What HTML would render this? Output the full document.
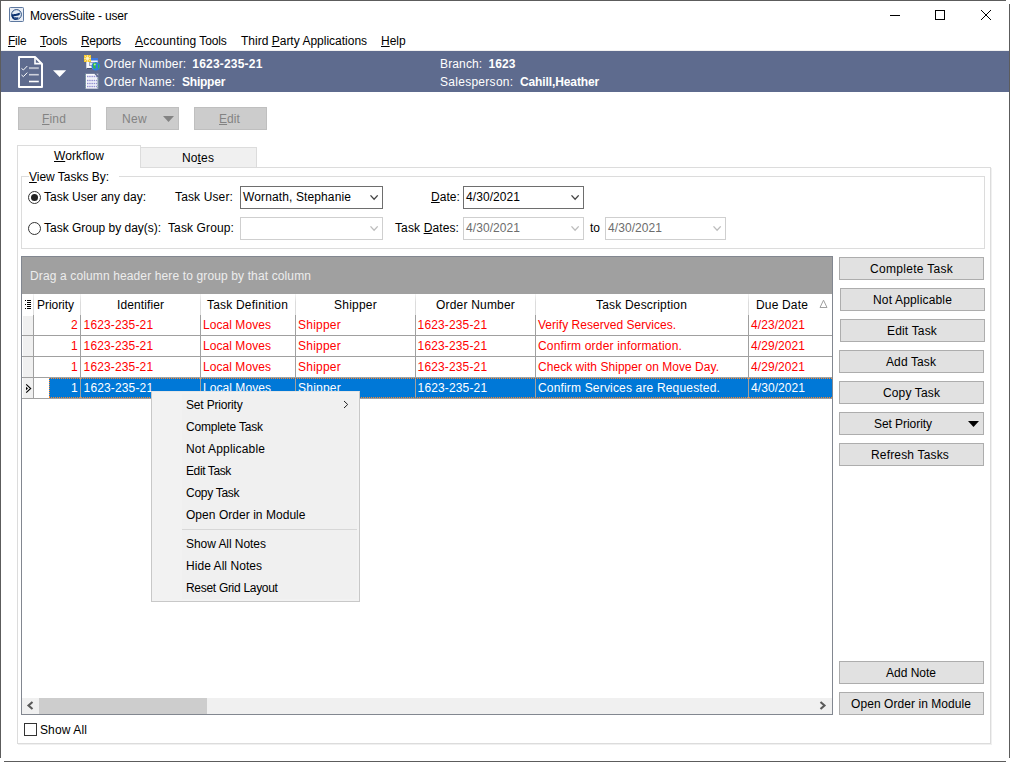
<!DOCTYPE html>
<html>
<head>
<meta charset="utf-8">
<title>MoversSuite - user</title>
<style>
html,body{margin:0;padding:0;}
body{width:1010px;height:762px;overflow:hidden;background:#fff;position:relative;font-family:"Liberation Sans",sans-serif;font-size:12px;color:#000;}
.abs{position:absolute;}
.t{position:absolute;white-space:nowrap;line-height:14px;height:14px;}
u{text-decoration:underline;text-underline-offset:1px;text-decoration-thickness:1px;}
#bt{left:0;top:0;width:1006px;height:1px;background:#5c5c5c;}
#bl{left:0;top:0;width:1px;height:758px;background:#5c5c5c;}
#br{left:1009px;top:4px;width:1px;height:754px;background:#5c5c5c;}
#bb{left:4px;top:761px;width:1002px;height:1px;background:#5c5c5c;}
#hdr{left:1px;top:51px;width:1008px;height:41px;background:#5e6b8e;}
.hw{color:#fff;}
.b{font-weight:bold;}
.tbtn{position:absolute;top:107px;width:71px;height:21px;background:#ccc;border:1px solid #bfbfbf;}
.g{color:#838383;}
#panel{left:17px;top:167px;width:974px;height:577px;border:1px solid #dcdcdc;box-sizing:border-box;background:#fff;box-shadow:1px 1px 0 #f0f0f0;}
#tab1{left:17px;top:145px;width:124px;height:23px;border:1px solid #dcdcdc;border-bottom:none;box-sizing:border-box;background:#fff;}
#tab2{left:140px;top:147px;width:117px;height:20px;border:1px solid #dcdcdc;border-bottom:none;box-sizing:border-box;background:#f0f0f0;}
#gb{left:21px;top:176px;width:964px;height:73px;border:1px solid #dcdcdc;box-sizing:border-box;}
.combo{position:absolute;box-sizing:border-box;background:#fff;height:23px;}
.combo svg{position:absolute;right:3px;top:8px;}
.en{border:1px solid #6e6e6e;}
.dis{border:1px solid #cfcfcf;}
.dt{color:#6d6d6d;}
.radio{position:absolute;width:11px;height:11px;border:1px solid #333;border-radius:50%;background:#fff;}
#grid{left:21px;top:256px;width:812px;height:459px;border:1px solid #828790;box-sizing:border-box;background:#fff;}
#gpanel{left:22px;top:257px;width:810px;height:37px;background:#a0a0a0;}
.vl{position:absolute;width:1px;background:#a0a0a0;}
.hl{position:absolute;height:1px;background:#a0a0a0;left:22px;width:810px;}
.r{color:#f00;}
.w{color:#fff;}
.rbtn{position:absolute;width:143px;height:21px;border:1px solid #adadad;background:#e1e1e1;}
#ctx{left:151px;top:391px;width:209px;height:211px;box-sizing:border-box;border:1px solid #c8c8c8;border-top-color:#e6e6e6;background:#f2f2f2;}
#ctxg{left:182px;top:394px;width:175px;height:205px;background:#f0f0f0;}
.mi{position:absolute;white-space:nowrap;line-height:16px;height:16px;}
</style>
</head>
<body>
<div class="abs" id="icon" style="left:9px;top:7px;width:15px;height:15px;">
<svg width="15" height="15" viewBox="0 0 15 15"><rect x="0.5" y="0.5" width="14" height="14" rx="0.8" fill="#e8edf5" stroke="#5d789f"/><circle cx="7.5" cy="7.5" r="4.9" fill="#e4ebf4" stroke="#123a72" stroke-width="0.9"/><path transform="translate(0,0.8)" d="M2.700 6.300C4.200 5.700 5.600 6.600 7.300 6L10.600 4.900C11.300 6 10.800 7.300 9.400 7.700 7.600 8.200 5.400 8 4 9 5.600 9.600 8 9 9.600 9.700 8.800 12 5.600 12.900 3.900 11.300 2.700 10.100 2.400 8 2.700 6.300Z" fill="#0c3270"/><path d="M3.400 6.900h1.600" stroke="#c9d6e8" stroke-width="0.8"/><path d="M5 10.700c1.300.3 2.400.2 3.300-.2" stroke="#9fb3d1" stroke-width="0.700" fill="none"/></svg>
</div>
<div class="t" style="left:30px;top:9px;letter-spacing:-0.17px;">MoversSuite - user</div>
<svg class="abs" style="left:880px;top:5px;" width="120" height="22" viewBox="0 0 120 22"><path d="M10 10.5h10" stroke="#000" stroke-width="1"/><rect x="55.5" y="5.5" width="9" height="9" fill="none" stroke="#000"/><path d="M101 5l10 10M111 5l-10 10" stroke="#000" stroke-width="1"/></svg>
<div class="abs" style="left:1px;top:50px;width:1008px;height:1px;background:#f0f0f0;"></div>
<div class="t" style="left:8px;top:34px;letter-spacing:-0.25px;"><u>F</u>ile</div>
<div class="t" style="left:40px;top:34px;letter-spacing:-0.2px;"><u>T</u>ools</div>
<div class="t" style="left:81px;top:34px;letter-spacing:-0.34px;"><u>R</u>eports</div>
<div class="t" style="left:135px;top:34px;letter-spacing:0.2px;"><u>A</u>ccounting<span style="letter-spacing:-0.15px;"> Tools</span></div>
<div class="t" style="left:241px;top:34px;letter-spacing:0px;">Third <u>P</u>arty Applications</div>
<div class="t" style="left:381px;top:34px;letter-spacing:0px;"><u>H</u>elp</div>
<div class="abs" id="hdr"></div>
<svg class="abs" style="left:17px;top:55px;" width="52" height="36" viewBox="0 0 52 36"><path d="M2 2H18L25 9V32H2Z" fill="none" stroke="#fff" stroke-width="2" stroke-linejoin="round"/><path d="M18 2V8.6H25" fill="none" stroke="#fff" stroke-width="1.6"/><path d="M4.5 13.4L6.4 15 10.3 11M4.5 20L6.4 21.6 10.3 17.6" fill="none" stroke="#fff" stroke-width="1"/><path d="M12 13.1H21.8" stroke="#b3b8c8" stroke-width="2"/><path d="M12 19.7H21.8" stroke="#ced1db" stroke-width="1.6"/><path d="M12 26.5H21.8" stroke="#fff" stroke-width="1.6"/><path d="M36 15.2H49.2L42.6 22Z" fill="#fff"/></svg>
<div class="abs" id="ico1" style="left:83px;top:54px;width:18px;height:18px;">
<svg width="18" height="18" viewBox="0 0 18 18"><rect x="3.5" y="4.5" width="11" height="10" fill="#f6f7fb" stroke="#c9cfdf"/><rect x="8" y="4" width="7" height="2.5" fill="#3d78e0"/><rect x="6" y="8" width="5" height="4" fill="#9aa3b8"/><rect x="7" y="9" width="3" height="2" fill="#e8ebf3"/><path d="M3.5 14.5H9" stroke="#46506e" stroke-width="1"/><rect x="1" y="1" width="7" height="7" fill="#f5c934"/><path d="M4.5 1v7M1 4.5h7M2 2l5 5M7 2l-5 5" stroke="#fbe79a" stroke-width="0.9"/><circle cx="4.5" cy="4.5" r="1.2" fill="#fff6d0"/><circle cx="12.8" cy="12.2" r="4.3" fill="#2f7be0"/><path d="M10.5 9.5c1.2-1 2.5-1 3-.2.300 1-1 1.200-1.200 2.200-.2 1 .8 1.300.5 2.300-.3 1-1.500 1.200-2.200.4-.6-.8.200-1.600-.3-2.500-.4-.8-.6-1.400.2-2.200z" fill="#2fc035"/><path d="M15.2 10c.8.400 1.400 1.500 1.200 2.800-.3 1.200-1 1.900-1.600 2-.2-.8.600-1.400.4-2.300-.2-.9-.6-1.600 0-2.500z" fill="#34c23a"/><circle cx="11.800" cy="10.600" r="1" fill="#c8f5c0" opacity="0.8"/></svg>
</div>
<div class="abs" id="ico2" style="left:84px;top:73px;width:16px;height:17px;">
<svg width="16" height="17" viewBox="0 0 16 17"><rect x="1" y="0.5" width="13.5" height="15.5" fill="#8a93b0"/><rect x="2" y="1" width="11.5" height="14.5" fill="#fbfbfe"/><path d="M3 3.5h10M3 7.5h10M3 10.5h10M3 13.5h10" stroke="#8f8ed0" stroke-width="1.4" stroke-dasharray="1.5 0.7"/><path d="M3.5 5h9M3.5 9h9M3.5 12h9" stroke="#dfe3f3" stroke-width="0.8"/><path d="M1.5 1v15M14 3v13" stroke="#6f9a94" stroke-width="1" stroke-dasharray="1 1.2"/><path d="M11 0.5l3.500 3.500" stroke="#5e6b8e" stroke-width="1.5"/></svg>
</div>
<div class="t hw" style="left:104px;top:57px;letter-spacing:0.18px;">Order Number:</div>
<div class="t hw b" style="left:192.3px;top:57px;letter-spacing:0.2px;">1623-235-21</div>
<div class="t hw" style="left:104px;top:75px;letter-spacing:0.18px;">Order Name:</div>
<div class="t hw b" style="left:182px;top:75px;letter-spacing:-0.22px;">Shipper</div>
<div class="t hw" style="left:440px;top:57px;letter-spacing:0.14px;">Branch:</div>
<div class="t hw b" style="left:488.5px;top:57px;letter-spacing:0.1px;">1623</div>
<div class="t hw" style="left:440px;top:75px;letter-spacing:0.28px;">Salesperson:</div>
<div class="t hw b" style="left:520px;top:75px;letter-spacing:-0.11px;">Cahill,Heather</div>
<div class="tbtn" style="left:18px;"></div>
<div class="tbtn" style="left:106px;"></div>
<div class="tbtn" style="left:194px;"></div>
<div class="t g" style="left:42px;top:112px;letter-spacing:0.164px;"><u>F</u>ind</div>
<div class="t g" style="left:122px;top:112px;letter-spacing:0.328px;">New</div>
<svg class="abs" style="left:163px;top:116px;" width="11" height="6" viewBox="0 0 11 6"><path d="M0 0h11l-5.500 6z" fill="#838383"/></svg>
<div class="t g" style="left:219px;top:112px;letter-spacing:0.082px;"><u>E</u>dit</div>
<div class="abs" id="panel"></div><div class="abs" id="tab2"></div><div class="abs" id="tab1"></div>
<div class="t" style="left:54px;top:149px;letter-spacing:0.109px;"><u>W</u>orkflow</div>
<div class="t" style="left:182px;top:151px;letter-spacing:0.131px;">No<u>t</u>es</div>
<div class="abs" id="gb"></div>
<div class="t" style="left:29px;top:170px;letter-spacing:-0.017px;background:#fff;padding-right:10px;"><u>V</u>iew Tasks By:</div>
<div class="radio" style="left:28px;top:191px;"><div style="position:absolute;left:2px;top:2px;width:7px;height:7px;border-radius:50%;background:#222;"></div></div>
<div class="t" style="left:44px;top:190px;letter-spacing:-0.001px;">Task User any day:</div>
<div class="t" style="left:175px;top:190px;letter-spacing:0.133px;">Task User:</div>
<div class="combo en" style="left:240px;top:186px;width:143px;"><svg width="9" height="6" viewBox="0 0 9 6"><path d="M0.500 0.400l3.600 3.800 3.600-3.800" fill="none" stroke="#444" stroke-width="1.300"/></svg></div>
<div class="t" style="left:243px;top:190px;letter-spacing:0.122px;">Wornath, Stephanie</div>
<div class="t" style="left:431px;top:190px;letter-spacing:0.066px;"><u>D</u>ate:</div>
<div class="combo en" style="left:463px;top:186px;width:121px;"><svg width="9" height="6" viewBox="0 0 9 6"><path d="M0.500 0.400l3.600 3.800 3.600-3.800" fill="none" stroke="#444" stroke-width="1.300"/></svg></div>
<div class="t" style="left:466px;top:190px;letter-spacing:0.071px;">4/30/2021</div>
<div class="radio" style="left:28px;top:222px;"></div>
<div class="t" style="left:44px;top:221px;letter-spacing:-0.016px;">Task Group by day(s):</div>
<div class="t" style="left:168px;top:221px;letter-spacing:0.121px;">Task Group:</div>
<div class="combo dis" style="left:240px;top:217px;width:143px;"><svg width="9" height="6" viewBox="0 0 9 6"><path d="M0.500 0.400l3.600 3.800 3.600-3.800" fill="none" stroke="#bdbdbd" stroke-width="1.300"/></svg></div>
<div class="t" style="left:395px;top:221px;letter-spacing:0.121px;">Task <u>D</u>ates:</div>
<div class="combo dis" style="left:463px;top:217px;width:121px;"><svg width="9" height="6" viewBox="0 0 9 6"><path d="M0.500 0.400l3.600 3.800 3.600-3.800" fill="none" stroke="#bdbdbd" stroke-width="1.300"/></svg></div>
<div class="t dt" style="left:466px;top:221px;letter-spacing:0.071px;">4/30/2021</div>
<div class="t" style="left:590px;top:221px;letter-spacing:0px;">to</div>
<div class="combo dis" style="left:605px;top:217px;width:121px;"><svg width="9" height="6" viewBox="0 0 9 6"><path d="M0.500 0.400l3.600 3.800 3.600-3.800" fill="none" stroke="#bdbdbd" stroke-width="1.300"/></svg></div>
<div class="t dt" style="left:608px;top:221px;letter-spacing:0.071px;">4/30/2021</div>
<div class="abs" id="grid"></div><div class="abs" id="gpanel"></div>
<div class="t" style="left:30px;top:269px;letter-spacing:0.128px;color:#ededed;">Drag a column header here to group by that column</div>
<div class="vl" style="left:33px;top:294px;height:21px;background:linear-gradient(#f4f4f4,#dcdcdc 40%,#dcdcdc);"></div>
<div class="vl" style="left:80px;top:294px;height:21px;background:linear-gradient(#f4f4f4,#dcdcdc 40%,#dcdcdc);"></div>
<div class="vl" style="left:200px;top:294px;height:21px;background:linear-gradient(#f4f4f4,#dcdcdc 40%,#dcdcdc);"></div>
<div class="vl" style="left:295px;top:294px;height:21px;background:linear-gradient(#f4f4f4,#dcdcdc 40%,#dcdcdc);"></div>
<div class="vl" style="left:415px;top:294px;height:21px;background:linear-gradient(#f4f4f4,#dcdcdc 40%,#dcdcdc);"></div>
<div class="vl" style="left:535px;top:294px;height:21px;background:linear-gradient(#f4f4f4,#dcdcdc 40%,#dcdcdc);"></div>
<div class="vl" style="left:748px;top:294px;height:21px;background:linear-gradient(#f4f4f4,#dcdcdc 40%,#dcdcdc);"></div>
<div class="abs" style="left:23px;top:316px;width:10px;height:82px;background:#f0f0f0;"></div>
<div class="abs" style="left:49px;top:378px;width:783px;height:20px;background:#0078d7;"></div>
<div class="vl" style="left:33px;top:315px;height:83px;"></div>
<div class="vl" style="left:80px;top:315px;height:83px;"></div>
<div class="vl" style="left:200px;top:315px;height:83px;"></div>
<div class="vl" style="left:295px;top:315px;height:83px;"></div>
<div class="vl" style="left:415px;top:315px;height:83px;"></div>
<div class="vl" style="left:535px;top:315px;height:83px;"></div>
<div class="vl" style="left:748px;top:315px;height:83px;"></div>
<div class="hl" style="top:335px;"></div>
<div class="hl" style="top:356px;"></div>
<div class="hl" style="top:377px;"></div>
<div class="hl" style="top:398px;"></div>
<div class="abs" style="left:49px;top:378px;width:783px;height:1px;background:repeating-linear-gradient(90deg,#ff8728 0 1px,transparent 1px 2px);"></div>
<div class="abs" style="left:49px;top:397px;width:783px;height:1px;background:repeating-linear-gradient(90deg,#ff8728 0 1px,transparent 1px 2px);"></div>
<div class="abs" style="left:49px;top:378px;width:1px;height:20px;background:repeating-linear-gradient(180deg,#ff8728 0 1px,transparent 1px 2px);"></div>
<svg class="abs" style="left:24px;top:299px;" width="8" height="11" viewBox="0 0 8 11"><path d="M1 1.500h1M1 5.500h1M1 9.500h1M3 1.500h4M3 3.500h4M3 5.500h4M3 7.500h4M3 9.500h4" stroke="#000" stroke-width="1" shape-rendering="crispEdges"/></svg>
<svg class="abs" style="left:25px;top:383px;" width="7" height="11" viewBox="0 0 7 11"><path d="M1.200 1.400L5.700 5.500 1.200 9.600" fill="none" stroke="#000" stroke-width="1.100"/><path d="M1 3.700v3.600l2-1.800z" fill="#000"/></svg>
<div class="t" style="left:37px;top:298px;letter-spacing:-0.043px;">Priority</div>
<div class="t" style="left:117px;top:298px;letter-spacing:0.098px;">Identifier</div>
<div class="t" style="left:207px;top:298px;letter-spacing:0.198px;">Task Definition</div>
<div class="t" style="left:334px;top:298px;letter-spacing:0.234px;">Shipper</div>
<div class="t" style="left:436px;top:298px;letter-spacing:0.193px;">Order Number</div>
<div class="t" style="left:596px;top:298px;letter-spacing:0.186px;">Task Description</div>
<div class="t" style="left:756px;top:298px;letter-spacing:0.164px;">Due Date</div>
<svg class="abs" style="left:819px;top:299px;" width="9" height="10" viewBox="0 0 9 10"><path d="M4.500 1.200L1 8.500h7z" fill="none" stroke="#a0a0a0" stroke-width="1"/></svg>
<div class="t r" style="left:71px;top:318px;letter-spacing:0.328px;">2</div>
<div class="t r" style="left:83.6px;top:318px;letter-spacing:0.141px;">1623-235-21</div>
<div class="t r" style="left:203px;top:318px;letter-spacing:0.058px;">Local Moves</div>
<div class="t r" style="left:298px;top:318px;letter-spacing:0.234px;">Shipper</div>
<div class="t r" style="left:417.6px;top:318px;letter-spacing:0.141px;">1623-235-21</div>
<div class="t r" style="left:538px;top:318px;letter-spacing:0.025px;">Verify Reserved Services.</div>
<div class="t r" style="left:751px;top:318px;letter-spacing:0.071px;">4/23/2021</div>
<div class="t r" style="left:71px;top:339px;letter-spacing:0.328px;">1</div>
<div class="t r" style="left:83.6px;top:339px;letter-spacing:0.141px;">1623-235-21</div>
<div class="t r" style="left:203px;top:339px;letter-spacing:0.058px;">Local Moves</div>
<div class="t r" style="left:298px;top:339px;letter-spacing:0.234px;">Shipper</div>
<div class="t r" style="left:417.6px;top:339px;letter-spacing:0.141px;">1623-235-21</div>
<div class="t r" style="left:538px;top:339px;letter-spacing:0.178px;">Confirm order information.</div>
<div class="t r" style="left:751px;top:339px;letter-spacing:0.071px;">4/29/2021</div>
<div class="t r" style="left:71px;top:360px;letter-spacing:0.328px;">1</div>
<div class="t r" style="left:83.6px;top:360px;letter-spacing:0.141px;">1623-235-21</div>
<div class="t r" style="left:203px;top:360px;letter-spacing:0.058px;">Local Moves</div>
<div class="t r" style="left:298px;top:360px;letter-spacing:0.234px;">Shipper</div>
<div class="t r" style="left:417.6px;top:360px;letter-spacing:0.141px;">1623-235-21</div>
<div class="t r" style="left:538px;top:360px;letter-spacing:0.038px;">Check with Shipper on Move Day.</div>
<div class="t r" style="left:751px;top:360px;letter-spacing:0.071px;">4/29/2021</div>
<div class="t w" style="left:71px;top:381px;letter-spacing:0.328px;">1</div>
<div class="t w" style="left:83.6px;top:381px;letter-spacing:0.141px;">1623-235-21</div>
<div class="t w" style="left:203px;top:381px;letter-spacing:0.058px;">Local Moves</div>
<div class="t w" style="left:298px;top:381px;letter-spacing:0.234px;">Shipper</div>
<div class="t w" style="left:417.6px;top:381px;letter-spacing:0.141px;">1623-235-21</div>
<div class="t w" style="left:538px;top:381px;letter-spacing:0.17px;">Confirm Services are Requested.</div>
<div class="t w" style="left:751px;top:381px;letter-spacing:0.071px;">4/30/2021</div>
<div class="rbtn" style="left:839px;top:257px;"></div>
<div class="t" style="left:870px;top:262px;letter-spacing:0.297px;">Complete Task</div>
<div class="rbtn" style="left:840px;top:288px;"></div>
<div class="t" style="left:873px;top:293px;letter-spacing:0.163px;">Not Applicable</div>
<div class="rbtn" style="left:840px;top:319px;"></div>
<div class="t" style="left:887px;top:324px;letter-spacing:0.172px;">Edit Task</div>
<div class="rbtn" style="left:839px;top:350px;"></div>
<div class="t" style="left:886px;top:355px;letter-spacing:0.109px;">Add Task</div>
<div class="rbtn" style="left:839px;top:381px;"></div>
<div class="t" style="left:883px;top:386px;letter-spacing:0.134px;">Copy Task</div>
<div class="rbtn" style="left:839px;top:412px;"></div>
<div class="rbtn" style="left:839px;top:443px;"></div>
<div class="t" style="left:871px;top:448px;letter-spacing:0.169px;">Refresh Tasks</div>
<div class="rbtn" style="left:839px;top:661px;"></div>
<div class="t" style="left:886px;top:666px;letter-spacing:-0.002px;">Add Note</div>
<div class="rbtn" style="left:839px;top:692px;"></div>
<div class="t" style="left:851px;top:697px;letter-spacing:0.065px;">Open Order in Module</div>
<div class="t" style="left:874px;top:417px;letter-spacing:-0.056px;">Set Priority</div>
<svg class="abs" style="left:968px;top:421px;" width="11" height="6" viewBox="0 0 11 6"><path d="M0 0h11l-5.500 6z" fill="#000"/></svg>
<div class="abs" style="left:22px;top:698px;width:810px;height:16px;background:#f0f0f0;"></div>
<div class="abs" style="left:39px;top:698px;width:168px;height:16px;background:#cdcdcd;"></div>
<svg class="abs" style="left:26px;top:701px;" width="8" height="9" viewBox="0 0 8 9"><path d="M6.500 1l-4 3.500 4 3.500" fill="none" stroke="#5a5a5a" stroke-width="2.100"/></svg>
<svg class="abs" style="left:819px;top:701px;" width="8" height="9" viewBox="0 0 8 9"><path d="M1.500 1l4 3.500-4 3.500" fill="none" stroke="#5a5a5a" stroke-width="2.100"/></svg>
<div class="abs" style="left:24px;top:723px;width:11px;height:11px;border:1px solid #333;background:#fff;"></div>
<div class="t" style="left:40px;top:723px;letter-spacing:0.121px;">Show All</div>
<div class="abs" id="ctx"></div><div class="abs" id="ctxg"></div>
<div class="mi" style="left:186px;top:397px;letter-spacing:-0.18px;">Set Priority</div>
<div class="mi" style="left:186px;top:419px;letter-spacing:-0.17px;">Complete Task</div>
<div class="mi" style="left:186px;top:441px;letter-spacing:0.17px;">Not Applicable</div>
<div class="mi" style="left:186px;top:463px;letter-spacing:-0.39px;">Edit Task</div>
<div class="mi" style="left:186px;top:485px;letter-spacing:-0.29px;">Copy Task</div>
<div class="mi" style="left:186px;top:507px;letter-spacing:0.04px;">Open Order in Module</div>
<div class="mi" style="left:186px;top:536px;letter-spacing:-0.06px;">Show All Notes</div>
<div class="mi" style="left:186px;top:558px;letter-spacing:0.05px;">Hide All Notes</div>
<div class="mi" style="left:186px;top:580px;letter-spacing:-0.3px;">Reset Grid Layout</div>
<svg class="abs" style="left:343px;top:400px;" width="6" height="9" viewBox="0 0 6 9"><path d="M1 1l3.700 3.500-3.700 3.500" fill="none" stroke="#222" stroke-width="1"/></svg>
<div class="abs" style="left:182px;top:529px;width:175px;height:1px;background:#d7d7d7;"></div>
<div class="abs" id="bt"></div><div class="abs" id="bl"></div><div class="abs" id="br"></div><div class="abs" id="bb"></div>
</body>
</html>
